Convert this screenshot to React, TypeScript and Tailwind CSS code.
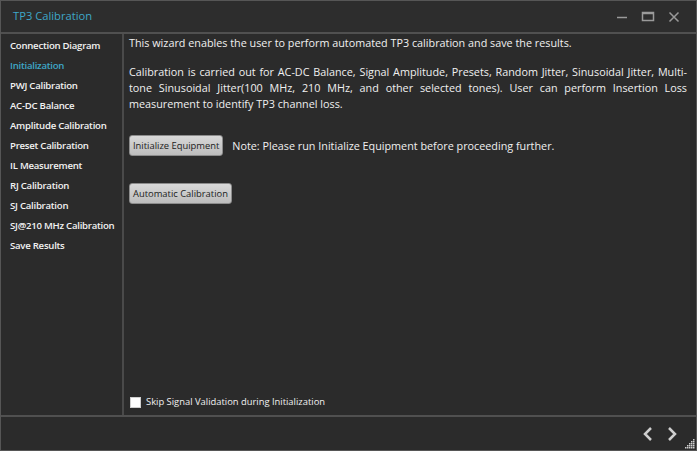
import React from "react";

const items = [
  "Connection Diagram",
  "Initialization",
  "PWJ Calibration",
  "AC-DC Balance",
  "Amplitude Calibration",
  "Preset Calibration",
  "IL Measurement",
  "RJ Calibration",
  "SJ Calibration",
  "SJ@210 MHz Calibration",
  "Save Results",
];

export default function App() {
  return (
    <div className="w-[697px] h-[451px] bg-[#2b2b2b] border border-[#565656] flex flex-col overflow-hidden text-[#f0f0f0] [font-family:'Open_Sans',sans-serif]">
      {/* title bar */}
      <div className="h-[31px] shrink-0 flex items-center justify-between pl-[12px] pr-[15px] bg-[#2d2d2d]">
        <span className="text-[11.2px] text-[#3ea7c8]">TP3 Calibration</span>
        <div className="flex items-center gap-[12px]">
          <svg width="14" height="14" viewBox="0 0 14 14"><path d="M2 7.5h10" stroke="#9a9a9a" strokeWidth="1.5" /></svg>
          <svg width="14" height="14" viewBox="0 0 14 14"><rect x="1.5" y="2.5" width="11" height="8" fill="none" stroke="#9a9a9a" strokeWidth="1.5" /><path d="M1.5 3.5h11" stroke="#9a9a9a" strokeWidth="1.5"/></svg>
          <svg width="14" height="14" viewBox="0 0 14 14"><path d="M2.5 2.5l9 9M11.5 2.5l-9 9" stroke="#9a9a9a" strokeWidth="1.5" /></svg>
        </div>
      </div>
      <div className="h-[2px] shrink-0 bg-[#505050]" />
      {/* main */}
      <div className="flex-1 flex min-h-0">
        <div className="w-[123px] shrink-0 border-r-2 border-[#4a4a4a] pt-[2px] pl-[9px]">
          {items.map((t) => (
            <div
              key={t}
              className={`h-[20px] flex items-center text-[9.6px] font-semibold tracking-[-0.25px] ${t === "Initialization" ? "text-[#3ea7c8]" : "text-[#f2f2f2]"}`}
            >
              {t}
            </div>
          ))}
        </div>
        <div className="flex-1 flex flex-col pl-[5px] pr-[9px] pt-[1px] pb-[5px] text-[10.8px] leading-[16px]">
          <p>This wizard enables the user to perform automated TP3 calibration and save the results.</p>
          <div className="mt-[13px]">
            <p className="text-justify [text-align-last:justify]">Calibration is carried out for AC-DC Balance, Signal Amplitude, Presets, Random Jitter, Sinusoidal Jitter, Multi-</p>
            <p className="text-justify [text-align-last:justify]">tone Sinusoidal Jitter(100 MHz, 210 MHz, and other selected tones). User can perform Insertion Loss</p>
            <p>measurement to identify TP3 channel loss.</p>
          </div>
          <div className="mt-[23px] flex items-center">
            <button className="h-[21px] px-[3px] rounded-[3px] border border-[#8c8c8c] bg-gradient-to-b from-[#d8d8d8] to-[#bdbdbd] text-[9.4px] text-[#1c1c1c] leading-none">Initialize Equipment</button>
            <span className="ml-[9px]">Note: Please run Initialize Equipment before proceeding further.</span>
          </div>
          <div className="mt-[27px] flex">
            <button className="h-[21px] px-[3px] rounded-[3px] border border-[#8c8c8c] bg-gradient-to-b from-[#d8d8d8] to-[#bdbdbd] text-[9.4px] text-[#1c1c1c] leading-none">Automatic Calibration</button>
          </div>
          <div className="mt-auto flex items-center pl-[1px]">
            <span className="w-[11px] h-[11px] bg-white border border-[#cfcfcf]" />
            <span className="ml-[5px] text-[9.4px]">Skip Signal Validation during Initialization</span>
          </div>
        </div>
      </div>
      <div className="h-[2px] shrink-0 bg-[#505050]" />
      {/* footer */}
      <div className="h-[33px] shrink-0 relative flex items-center justify-end pr-[17px] gap-[10px]">
        <svg width="14" height="16" viewBox="0 0 14 16"><path d="M10 2L4 8l6 6" fill="none" stroke="#cfcfcf" strokeWidth="2.5" /></svg>
        <svg width="14" height="16" viewBox="0 0 14 16"><path d="M4 2l6 6-6 6" fill="none" stroke="#cfcfcf" strokeWidth="2.5" /></svg>
        <svg className="absolute right-[1px] bottom-[1px]" width="10" height="10" viewBox="0 0 10 10">
          {[[8,0],[6,2],[8,2],[4,4],[6,4],[8,4],[2,6],[4,6],[6,6],[8,6],[0,8],[2,8],[4,8],[6,8],[8,8]].map(([x,y],i)=>(
            <rect key={i} x={x} y={y} width="1.5" height="1.5" fill="#cfcfcf" />
          ))}
        </svg>
      </div>
    </div>
  );
}
